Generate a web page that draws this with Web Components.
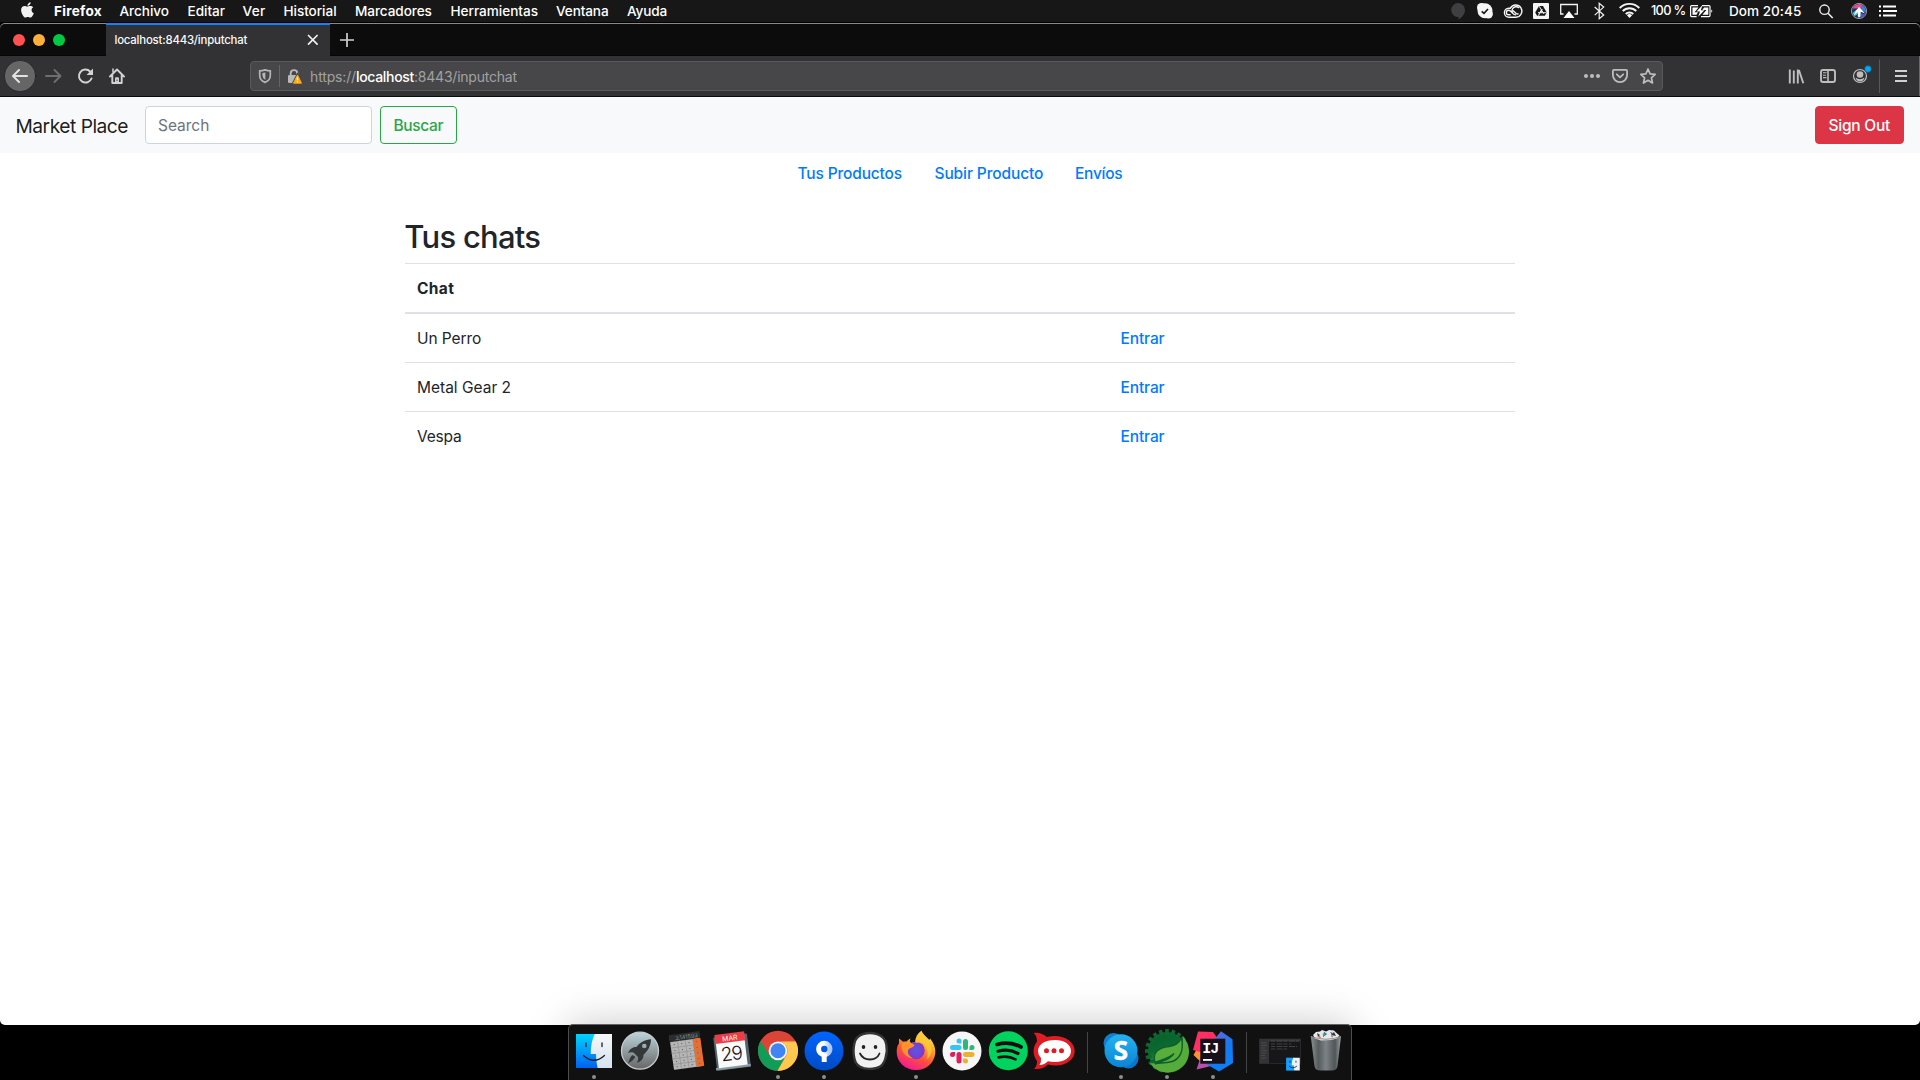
<!DOCTYPE html>
<html lang="es">
<head>
<meta charset="utf-8">
<title>localhost:8443/inputchat</title>
<style>
html,body{margin:0;height:100%;background:#000;overflow:hidden}
body{font-family:Inter,"Liberation Sans",sans-serif;font-size:15.5px;color:#212529}
</style>
</head>
<body>
<mac-desktop></mac-desktop>
<script>
const define = (name, html) => {
  const tpl = document.createElement('template');
  tpl.innerHTML = html;
  customElements.define(name, class extends HTMLElement {
    constructor() {
      super();
      this.attachShadow({mode: 'open'}).appendChild(document.importNode(tpl.content, true));
    }
  });
};

/* One line of text tracked to an exact advance width (attribute w). */
customElements.define('fit-text', class extends HTMLElement {
  constructor() {
    super();
    this.attachShadow({mode: 'open'}).innerHTML =
      '<style>:host{display:block;flex:none;white-space:pre}span{display:inline-block}</style><span><slot></slot></span>';
  }
  connectedCallback() {
    const span = this.shadowRoot.querySelector('span');
    const want = parseFloat(this.getAttribute('w'));
    const n = this.textContent.length;
    if (!want || !n) return;
    span.style.letterSpacing = '0px';
    const natural = span.getBoundingClientRect().width;
    span.style.letterSpacing = ((want - natural) / n).toFixed(3) + 'px';
  }
});

/* ---------- menu bar ---------- */
define('mac-menubar', `
<style>
:host{display:flex;justify-content:space-between;height:22px;background:#171717;color:#fff;font-size:13.6px;font-weight:500;line-height:22px;box-sizing:border-box;overflow:hidden}
div{display:flex}
span{display:block;flex:none}
svg{display:block;flex:none;height:22px}
.l{padding-left:21px}
b{font-weight:700}
</style>
<div class="l">
  <svg width="33" height="22" viewBox="0 0 33 22"><path fill="#f2f2f2" d="M9.6 2.2c.1 1-.3 1.900-.9 2.600-.6.700-1.400 1.100-2.200 1-.1-.9.300-1.800.9-2.400.6-.7 1.500-1.100 2.200-1.200zM12.300 7.300c-1.200.7-1.800 1.700-1.700 3 .1 1.400.8 2.300 2.200 2.900-.3 1-.8 1.900-1.400 2.700-.7 1-1.400 1.700-2.300 1.700-.9 0-1.200-.5-2.300-.5s-1.500.5-2.400.5c-.9 0-1.600-.8-2.300-1.800C.8 13.800.1 11.400.1 9.900c0-2.600 1.700-4 3.400-4 1 0 1.900.7 2.700.7.700 0 1.700-.7 3-.7 1.200 0 2.300.5 3.100 1.400z"/></svg>
  <span style="width:65.500px"><fit-text w="48"><b>Firefox</b></fit-text></span>
  <span style="width:68px"><fit-text w="49.500">Archivo</fit-text></span>
  <span style="width:55px"><fit-text w="37.500">Editar</fit-text></span>
  <span style="width:41px"><fit-text w="23">Ver</fit-text></span>
  <span style="width:71.500px"><fit-text w="53">Historial</fit-text></span>
  <span style="width:95.500px"><fit-text w="76.800">Marcadores</fit-text></span>
  <span style="width:105.500px"><fit-text w="87.500">Herramientas</fit-text></span>
  <span style="width:71px"><fit-text w="52.500">Ventana</fit-text></span>
  <span><fit-text w="40">Ayuda</fit-text></span>
</div>
<div>
  <svg width="200" height="22" viewBox="1450 0 200 22" fill="none" stroke="#f4f4f4" stroke-width="1.300">
    <path fill="#3f3f41" stroke="none" d="M1458 3a7 7 0 0 1 7 7c0 4-3 7.500-6.500 9.500V17A7 7 0 1 1 1458 3z"/>
    <circle cx="1481.500" cy="7.500" r="4.500" fill="#f6f6f6" stroke="none"/><circle cx="1488.300" cy="14" r="4.600" fill="#f6f6f6" stroke="none"/><circle cx="1485" cy="10.800" r="7.500" fill="#f6f6f6" stroke="none"/>
    <path stroke="#171717" stroke-width="1.600" d="m1481.700 11.300 2.300 2 4-4.300"/>
    <g stroke-width="1.400"><path d="M1509 17.200h7a6.100 6.100 0 1 0-5.600-9h-1.600a4.500 4.500 0 0 0 .2 9z"/><path d="M1519 7.900a4.100 4.100 0 1 0-2.900 7q-1.600 0-2.800-1.200l-2.600-2.500q-1-.9-2.100-.9a2.200 2.200 0 0 0 0 4.500h2M1512.900 10.500l3.300 3q1.300 1 2.300 0"/></g>
    <rect x="1533" y="3" width="16" height="16" rx="1" fill="#f4f4f4" stroke="none"/>
    <path fill="#171717" stroke="none" d="M1539 6h4l3.700 6.500-1.800 3.200h-7.800l-1.900-3.200z"/><path stroke="#f4f4f4" stroke-width="1" d="m1539.300 6.300 4.500 7.500M1542.300 9l-4 6.700M1538 12.700h8.500"/><path d="m1541 9.800 1.400 2.500h-2.800z" fill="#f4f4f4" stroke="none"/>
    <path d="M1563.500 14h-2.800V4.500h16.600V14h-2.800"/><path fill="#fff" stroke="none" d="m1569 11 5.500 7h-11z"/>
    <path stroke-width="1.200" d="m1594.700 7 9 8-4.500 3.700V3.300l4.500 3.800-9 8"/>
    <path stroke-width="1.900" d="M1619.700 8a13.700 13.700 0 0 1 19.600 0M1622.700 11a9.600 9.600 0 0 1 13.600 0M1625.700 14a5.400 5.400 0 0 1 7.600 0"/><path fill="#fff" stroke="none" d="m1626.900 15.200 2.600 2.700 2.600-2.700a3.800 3.800 0 0 0-5.200 0z"/>
  </svg>
  <span style="width:39px;padding-left:1.500px;font-size:12.800px"><fit-text w="34.500">100 %</fit-text></span>
  <svg width="38" height="22" viewBox="1690 0 38 22"><path fill="none" stroke="#fff" stroke-width="1.200" d="M1698 5.600h-6.400q-1 0-1 1v9q0 1 1 1h5M1702 5.600h7q1 0 1 1v9q0 1-1 1h-8"/><path d="M1692.500 7.500h6l-4 4.700h3.500l-1.500 2.600h-4zM1708.300 7.500h-4.300l-1.600 2.500h4l-4 4.800h5.900zM1711.300 9.500q2 1.600 0 3.200z" fill="#fff"/><path d="m1702.600 5-6.100 6.500h3.500l-1.800 5.300 6.200-6.500h-3.600z" fill="#fff"/></svg>
  <span style="width:89px;padding-left:1px"><fit-text w="72.300">Dom 20:45</fit-text></span>
  <svg width="102" height="22" viewBox="1818 0 102 22">
    <circle cx="1824.500" cy="9.700" r="4.700" fill="none" stroke="#eee" stroke-width="1.400"/><path d="m1828 13.200 4.700 4.800" stroke="#eee" stroke-width="1.600"/>
    <circle cx="1859" cy="11" r="7.600" fill="#2b2f5e" stroke="#b5b5ba" stroke-width=".8"/>
    <path fill="#e0508f" d="M1852.800 8.500a6.900 6.900 0 0 1 9.700-3.600l-1.500 4-2.500-.7z"/><path fill="#3f7fd8" d="M1862 5.200a7 7 0 0 1 3.700 7.300l-4.700-3z"/><path fill="#43c7d2" d="m1852.500 13 5.500-4.500 1 4.500-4.300 3.300z"/><path fill="#3a64c8" d="m1860 13 5 1.500a7 7 0 0 1-4.500 3.200z"/>
    <path fill="#fff" d="m1859 7 3.500 3.600 2.500 3-4.300-1.900-.3 4.800-1.600 1.300-1-1.700.2-4.200-4 3 1.500-3.500z"/>
    <path stroke="#fff" stroke-width="1.800" d="M1879 6.500h2m2 0h13M1879 11h2m2 0h14M1879 15.500h2m2 0h13"/>
  </svg>
</div>`);

/* ---------- tab strip ---------- */
define('browser-tab', `
<style>
:host{display:flex;align-items:center;box-sizing:border-box;width:224.500px;height:33px;padding:0 11.500px 1px 9px;justify-content:space-between;background:#323234;border-top:2px solid #0a84ff;color:#f9f9fa;font-size:11.400px;font-weight:500}
</style>
<fit-text w="132.700">localhost:8443/inputchat</fit-text>
<svg width="12" height="12" viewBox="0 0 12 12"><path stroke="#f0f0f0" stroke-width="1.700" stroke-linecap="round" d="m1.500 1.500 8.600 8.600M10.100 1.500 1.500 10.100"/></svg>`);
define('tab-strip', `
<style>
:host{display:flex;box-sizing:border-box;height:33px;background:#0c0c0d;border-radius:5px 5px 0 0;box-shadow:inset 0 1px #8a8a8a,inset 0 -1px #050505}
.lights{display:flex;width:105.500px;box-sizing:border-box;padding:11px 0 0 13px;gap:8px}
i{width:12px;height:12px;border-radius:50%;background:var(--c)}
svg{margin:8.500px 0 0 9px}
browser-tab svg{margin:0}
</style>
<div class="lights"><i style="--c:#ff5150"></i><i style="--c:#ffb03a"></i><i style="--c:#00ca44"></i></div>
<browser-tab></browser-tab>
<svg width="16" height="16" viewBox="0 0 16 16"><path stroke="#d0d0d0" stroke-width="1.700" d="M1 8h14M8 1v14"/></svg>`);

/* ---------- toolbar ---------- */
define('url-bar', `
<style>
:host{display:flex;align-items:center;box-sizing:border-box;width:1413px;height:30px;background:#474749;border:1px solid #59595b;border-radius:4px;font-size:14px;color:#a2a2a3}
svg{display:block;flex:none}
.url{display:flex;flex:1;padding-top:1px}
b{font-weight:500;color:#fff}
</style>
<svg width="59" height="28" viewBox="251 62 59 28" fill="none">
  <path stroke="#b5b5b6" stroke-width="1.700" d="M265 69.900q2.700 1 5.300 1v4.600q0 4.800-5.300 6.900-5.300-2.100-5.300-6.900v-4.600q2.600 0 5.300-1z"/><path fill="#b5b5b6" d="M265.400 72.400v7.600q-3-1.700-3-4.500v-2.500z"/>
  <path stroke="#646466" d="M279.500 65v22"/>
  <path stroke="#b9b9ba" stroke-width="1.900" d="M290.700 75v-1.700c0-4.200 6.600-4.200 6.600 0v1.200"/><rect x="288" y="75" width="10" height="8" rx="1.300" fill="#b9b9ba"/>
  <path fill="#474749" d="M297.500 72.300 303.500 84h-12z"/><path fill="#ffa914" stroke="#ffa914" stroke-linejoin="round" d="m297.500 75 4 8.200h-8z"/><path stroke="#fff" stroke-width="1.300" d="M297.500 77.200v3M297.500 81.200v1.200"/>
</svg>
<div class="url"><fit-text w="46">https://</fit-text><fit-text w="58">localhost</fit-text><fit-text w="102.800">:8443/inputchat</fit-text></div>
<style>.url fit-text:nth-child(2){color:#fff;font-weight:500}</style>
<svg width="82" height="28" viewBox="1580 62 82 28" fill="none" stroke="#bdbdbe" stroke-width="1.800">
  <g fill="#bdbdbe" stroke="none"><circle cx="1586" cy="76" r="2"/><circle cx="1592" cy="76" r="2"/><circle cx="1598" cy="76" r="2"/></g>
  <path d="M1614 69.900h12q1.100 0 1.100 1.100v4a7.100 7.100 0 0 1-14.200 0v-4q0-1.100 1.100-1.100z"/><path stroke-linecap="round" stroke-linejoin="round" d="m1616.800 74.300 3.200 3 3.200-3"/>
  <path stroke-width="1.700" stroke-linejoin="round" d="m1648 69 2.100 4.800 5.100.5-3.800 3.500 1.100 5.200-4.500-2.700-4.500 2.700 1.100-5.200-3.800-3.500 5.100-.5z"/>
</svg>`);
define('browser-toolbar', `
<style>
:host{display:flex;box-sizing:border-box;height:41px;padding-top:5px;background:#323234;border-bottom:1px solid #0a0a0b;justify-content:space-between}
svg{display:block;margin-top:-5px}
</style>
<svg width="250" height="40" viewBox="0 56 250 40" fill="none" stroke-linecap="round" stroke-linejoin="round">
  <circle cx="20" cy="76" r="15.700" fill="#666667" stroke="#1e1e20" stroke-width=".8"/>
  <path stroke="#e2e2e2" stroke-width="2" d="M27 76H13.500M19 70l-6 6 6 6"/>
  <path stroke="#6e6e70" stroke-width="2" d="M46 76h14M54.500 70l6 6-6 6"/>
  <path stroke="#d2d2d3" stroke-width="2" d="M91.500 78.500a6.500 6.500 0 1 1-1.400-7"/><path fill="#d2d2d3" d="M93 68.500v6.500h-6.500z"/>
  <path stroke="#d2d2d3" stroke-width="1.900" d="m110 76.500 7-7 7 7M112.300 75.500v7.500h9.400v-7.500"/><path stroke="#d2d2d3" stroke-width="1.500" d="M113 69v3"/><path fill="#d2d2d3" d="M115 83v-4.500q0-1.200 1-1.200h2q1 0 1 1.200V83z"/><path stroke="#323234" d="M117 80v.500"/>
</svg>
<url-bar></url-bar>
<svg width="257" height="40" viewBox="1663 56 257 40" fill="none" stroke="#bebebf" stroke-width="1.900">
  <path d="M1789.800 69.500v14M1793.800 70.500v13M1797.800 69.500v14M1798.900 70l4.400 13.300"/>
  <rect x="1821" y="70" width="14" height="12" rx="2"/><path stroke-width="1.600" d="M1828 70v12"/><path stroke-width="1.100" d="M1823 72.800h3.500M1823 75.200h3M1823 77.600h3.500"/>
  <circle cx="1860" cy="76" r="6.500" stroke-width="1.200"/><circle cx="1860" cy="74.500" r="3.300" fill="#bebebf" stroke="none"/><path fill="#bebebf" stroke="none" d="M1855.500 77.500q2 1.800 4.500 1.800t4.500-1.800q-1 4-4.500 4t-4.500-4z"/>
  <circle cx="1868" cy="69" r="3.400" fill="#00a8f5" stroke="#22465a" stroke-width=".7"/>
  <path stroke="#58585a" stroke-width="1" d="M1879.500 59.500v33.500"/>
  <path stroke="#d0d0d1" stroke-width="1.900" d="M1895 71h12M1895 76h12M1895 81h12"/>
  <path stroke="#6a6a6b" stroke-width="1" d="M1919.500 56v40"/>
</svg>`);

/* ---------- page ---------- */
define('market-button', `
<style>
:host{display:flex;box-sizing:border-box;height:38px;align-items:center;padding:0 13px 0 12.500px;border:1px solid var(--line);border-radius:4px;background:var(--fill,transparent);color:var(--ink);font-weight:500}
</style><slot></slot>`);
define('market-navbar', `
<style>
:host{display:flex;box-sizing:border-box;height:56px;padding:0 16px 0 15.500px;background:#f8f9fb;align-items:center;justify-content:space-between}
form{display:flex;align-items:center}
.brand{font-size:19.200px;color:rgba(0,0,0,.9);width:113px;margin-right:16.500px;padding-top:1px}
.in{display:flex;align-items:center;box-sizing:border-box;width:227px;height:38px;border:1px solid #ced4da;border-radius:4px;background:#fff;color:#6c757d;padding-left:12px;margin-right:8px}
</style>
<form><fit-text class="brand" w="112.500">Market Place</fit-text><div class="in"><fit-text w="51.300">Search</fit-text></div>
<market-button style="--line:#28a745;--ink:#28a745"><fit-text w="49.500">Buscar</fit-text></market-button></form>
<market-button style="--line:#dc3545;--fill:#dc3545;--ink:#fff"><fit-text w="61.500">Sign Out</fit-text></market-button>`);
define('market-links', `
<style>
:host{display:flex;height:40px;align-items:center;padding-left:797.500px;color:#007bff;font-weight:500}
fit-text{width:var(--w)}
</style>
<fit-text w="104.500" style="--w:137px">Tus Productos</fit-text><fit-text w="108.800" style="--w:140.500px">Subir Producto</fit-text><fit-text w="47.300">Envíos</fit-text>`);
define('chat-row', `
<style>
:host{display:flex;box-sizing:border-box;height:49px;padding:0 12px;border-top:1px solid #dee2e6;align-items:center}
.name{width:703.500px}
.act{color:#007bff;font-weight:500}
</style>
<div class="name"><slot></slot></div><div class="act"><slot name="action"></slot></div>`);
define('chat-list', `
<style>
:host{display:block;width:1110px;margin:24px auto 0}
h2{margin:0 0 8px -.7px;height:38px;font-size:31px;line-height:40px;font-weight:500}
.head{font-weight:700;border-bottom:2px solid #dee2e6;height:49px}
.head+chat-row{border-top:0;height:48px}
</style>
<h2><fit-text w="136">Tus chats</fit-text></h2>
<div class="head"><chat-row><fit-text w="37.200">Chat</fit-text></chat-row></div>
<chat-row><fit-text w="64.300">Un Perro</fit-text><fit-text slot="action" w="44">Entrar</fit-text></chat-row>
<chat-row><fit-text w="94">Metal Gear 2</fit-text><fit-text slot="action" w="44">Entrar</fit-text></chat-row>
<chat-row><fit-text w="44.500">Vespa</fit-text><fit-text slot="action" w="44">Entrar</fit-text></chat-row>`);
define('market-page', `
<style>:host{display:block;background:#fff;flex:1;border-radius:0 0 5px 5px;overflow:hidden}</style>
<market-navbar></market-navbar><market-links></market-links><chat-list></chat-list>`);

/* ---------- dock ---------- */
define('dock-item', `
<style>
:host{display:block;width:46px;height:56px;flex:none;position:relative}
:host([running])::after{content:"";position:absolute;left:21px;top:50px;width:4px;height:4px;border-radius:50%;background:#8e8e8e}
</style><slot></slot>`);

/* Cog outline for the leaf badge: 20 rectangular teeth around a 19px disc. */
const cog = Array.from({length: 20}, (_, i) =>
  `<rect x="21.2" y="5" width="3.600" height="6" transform="rotate(${i * 18} 23 27)"/>`).join('');

define('mac-dock', `
<style>
:host{display:flex;position:absolute;left:568px;top:1024px;box-sizing:border-box;width:784px;height:60px;padding-left:2px;background:#111;border:1px solid #4c4d4d;border-top-color:#616464;border-radius:5px 5px 0 0;box-shadow:0 0 42px rgba(0,0,0,.22)}
svg{display:block;margin-top:-1px}
hr{flex:none;width:1px;height:41px;margin:7px 10px;border:0;background:#444}
text{font-family:Inter,"Liberation Sans",sans-serif}
</style>
<dock-item running><svg width="46" height="56"><defs><linearGradient id="f1" x2="0" y2="1"><stop stop-color="#00d4ff"/><stop offset="1" stop-color="#0062f2"/></linearGradient><linearGradient id="f2" x2="0" y2="1"><stop stop-color="#f7f7f9"/><stop offset="1" stop-color="#d5e2ee"/></linearGradient></defs><path fill="url(#f1)" d="M5 10h25v34H5z"/><path fill="url(#f2)" d="M23.700 10H41v34H26.700q-1.500-5-1.700-14h-5.300q0-12 4-20z"/><path fill="none" stroke="#12202c" stroke-width="1.300" stroke-linecap="round" d="M15 19v3.500M31 19v3.500M12.500 31.500Q23 41 33.500 31.500"/></svg></dock-item>
<dock-item><svg width="46" height="56"><defs><linearGradient id="r1" x2="0" y2="1"><stop stop-color="#bcd5dc"/><stop offset="1" stop-color="#666"/></linearGradient></defs><circle cx="23" cy="26.700" r="18.500" fill="url(#r1)" stroke="#c9cccd" stroke-width="1.300"/><path fill="#35383a" fill-rule="evenodd" d="M34 15.300c-5.500.2-11 3-14.500 7.700-4-.2-7 2.500-8.500 6 2-.8 4-.8 5.700-.2l4.300 4.200c.5 2-.2 4-1 5.700 4-1 6.600-4 6.500-8C31 27 34 21.500 34 15.300zM27.300 19.700a2.300 2.300 0 1 1 0 4.600 2.300 2.300 0 0 1 0-4.600zM15.500 31c-2 1.500-3 4-4.300 8.500 3-2.500 4-2 5.500-4.500l1.800-2z"/></svg></dock-item>
<dock-item><svg width="46" height="56"><g transform="rotate(-8 23.500 27)"><rect x="8.500" y="10" width="30" height="34" rx="1" fill="#b5b5b5"/><path fill="#292d2e" d="M8 9h31v7H8z"/><path fill="#f26a25" d="M31.300 16H39v28h-7.700z"/><path stroke="#8c8c8c" stroke-width=".6" d="M8.500 22h30M8.500 27.500h30M8.500 33h30M8.500 38.500h30M16 16v28M23.700 16v28M31.300 16v28"/><g stroke="#666" stroke-width="1" stroke-dasharray="1.200 6.300"><path d="M11.600 19h27M11.600 25h27M11.600 30.500h27M11.600 36h27M11.600 41.300h27"/></g><text x="14" y="14.800" font-size="5.600" fill="#80908f">3,141593</text></g></svg></dock-item>
<dock-item><svg width="46" height="56"><g transform="translate(-.6 0) rotate(-7 23 27)"><rect x="6.500" y="11.500" width="34" height="33.500" rx="1" fill="#53636a"/><rect x="5.500" y="42" width="35" height="2.500" fill="#8b9aa0"/><rect x="8.500" y="10" width="29" height="32.500" fill="#fafafa"/><path fill="#ea3d46" d="M8 9h30v9H8z"/><text x="23" y="16.400" font-size="6.800" fill="#fff" text-anchor="middle">MAR</text><text x="22.600" y="36.200" font-size="19" font-weight="300" letter-spacing="-1" fill="#111" text-anchor="middle">29</text></g></svg></dock-item>
<dock-item running><svg width="46" height="56" viewBox="0 0 46 56"><circle cx="23" cy="26.800" r="20" fill="#dc4437"/><path fill="#109d58" d="M5.700 16.800A20 20 0 0 0 22.500 46.800L31.200 31.500A9.400 9.400 0 0 1 14.900 31.500z"/><path fill="#ffc94d" d="M23 17.400H40.700A20 20 0 0 1 22.500 46.800L31.200 31.500A9.400 9.400 0 0 0 23 17.400z"/><path fill="#dc4437" d="M5.700 16.800 14.900 31.500A9.400 9.400 0 0 1 23 17.400z"/><circle cx="23" cy="26.800" r="9.400" fill="#f4f4f4"/><circle cx="23" cy="26.800" r="7.500" fill="#3f85f3"/></svg></dock-item>
<dock-item running><svg width="46" height="56"><defs><linearGradient id="st" x2="0" y2="1"><stop stop-color="#0065ff"/><stop offset="1" stop-color="#004bc4"/></linearGradient><linearGradient id="sw"><stop offset=".4" stop-color="#fff"/><stop offset="1" stop-color="#a9c8ff"/></linearGradient></defs><circle cx="23" cy="27" r="19.500" fill="url(#st)"/><circle cx="23.300" cy="25" r="5.700" fill="none" stroke="url(#sw)" stroke-width="5"/><path fill="#fff" d="M20.700 30h5v8h-5z"/></svg></dock-item>
<dock-item><svg width="46" height="56"><path fill="#f1f1f1" stroke="#343434" stroke-width="2.400" d="M16 10.200q7-2.500 14 0 8 2.500 9.300 10 1.500 7-.8 14-2 8-9 9.800-7 1.700-13 .2Q9 42 7.500 35 5.500 27 7.500 19 9 12.500 16 10.200z"/><ellipse cx="16.500" cy="23" rx="1.800" ry="2" fill="#222"/><ellipse cx="28.500" cy="23" rx="1.800" ry="2" fill="#222"/><path fill="none" stroke="#252525" stroke-width="1.800" stroke-linecap="round" d="M13 29.500Q16 35.500 23 35.500t9.500-6"/></svg></dock-item>
<dock-item running><svg width="46" height="56"><defs><linearGradient id="ff" x1=".8" x2=".3" y2="1"><stop stop-color="#fff44f"/><stop offset=".35" stop-color="#ffa52a"/><stop offset=".65" stop-color="#ff4f3a"/><stop offset="1" stop-color="#f0189a"/></linearGradient><radialGradient id="fp"><stop stop-color="#5459e8"/><stop offset="1" stop-color="#8a35c4"/></radialGradient></defs><path fill="url(#ff)" d="M28.500 6.700c1 3.500 5 6 7.800 9.300l.8-1.600c4 5 5.700 10 5.200 15C41 39.500 33 46 23 46 12 46 3.700 38 3.700 28c0-4 .5-6 2.300-8.500v-5l4.200 3.300c1.300-.4 2.300-.4 3.500-.2 1-1.500 2.300-2.500 4-3-1.300 2-1 3.200.3 4.500l4-1c.3-5 2.500-8.700 6.500-11.400z"/><circle cx="23" cy="26.500" r="8.700" fill="url(#fp)"/><path fill="#ff932a" d="M9 19c4-2.500 9-1 12.500 2-1 3-5.500 2.500-6.500 5.300-1 3 1.500 6.500 5 8-6-.3-11-5-11.500-11z"/><path fill="#ffc936" d="M28.500 6.700c1 5 9.300 8.800 10 17.500.5 5-1.500 9-5 11.300 2.500-6.500.5-12-4-16.500-3-1-4.500-.500-7 0 .5-5.500 2.500-9.500 6-12.300z" opacity=".8"/></svg></dock-item>
<dock-item><svg width="46" height="56"><circle cx="23" cy="27" r="19.500" fill="#f6f6f6"/><g stroke-width="5" stroke-linecap="round"><path stroke="#36c5f0" d="M13.500 23.500h6.500"/><path stroke="#2eb67d" d="M26.500 17.500v6"/><path stroke="#ecb22e" d="M26.500 30.500h6.500"/><path stroke="#e01e5a" d="M20 30.500v6.500"/></g><path fill="#36c5f0" d="M22.500 19.500H20a2.500 2.500 0 1 1 2.500-2.500z"/><path fill="#2eb67d" d="M30.500 26v-2.500a2.500 2.500 0 1 1 2.500 2.500z"/><path fill="#ecb22e" d="M24 34.500h2.500A2.500 2.500 0 1 1 24 37z"/><path fill="#e01e5a" d="M16 28v2.500a2.500 2.500 0 1 1-2.500-2.500z"/></svg></dock-item>
<dock-item><svg width="46" height="56"><circle cx="23.300" cy="26.800" r="19.500" fill="#00d45f"/><g fill="none" stroke="#101010" stroke-linecap="round"><path stroke-width="3.800" d="M12 20.500q13-3.500 24 2.500"/><path stroke-width="3.200" d="M13 27.300q11-3 20 2.200"/><path stroke-width="2.700" d="M13.500 33.400q9.500-2.300 17 2"/></g></svg></dock-item>
<dock-item><svg width="46" height="56"><path fill="#df1b24" d="M2.700 9c5.300-.8 10 1 13 4C31 9 43.700 17 43.700 27S31 44.500 17 40.500C13 44.500 8 45.500 3 44.800c2.500-2 3.200-5 3-7.800C1.500 31 1.500 23 6 17.500 6 14 5 11 2.700 9z"/><path fill="#fff" d="M24 16c9.500 0 16 4.500 16 11s-6.500 11-16 11q-4 0-7-.8C14.500 39.500 12 41 8.500 41q2-3.500 1.500-7Q7 31 7 27c0-6.500 7-11 17-11z"/><g fill="#df1b24"><circle cx="15.500" cy="26.700" r="2.500"/><circle cx="23" cy="26.700" r="2.500"/><circle cx="30.500" cy="26.700" r="2.500"/></g></svg></dock-item>
<hr>
<dock-item running><svg width="46" height="56"><defs><linearGradient id="sk" x2="0" y2="1"><stop stop-color="#22b3ee"/><stop offset="1" stop-color="#0b84d8"/></linearGradient></defs><circle cx="15.500" cy="19" r="10" fill="#0f7fce"/><circle cx="30.500" cy="34.500" r="10" fill="#0a75c9"/><circle cx="23" cy="26.800" r="16.500" fill="url(#sk)"/><text x="23" y="36" font-size="26" font-weight="700" fill="#fff" stroke="#fff" stroke-width=".5" text-anchor="middle" style="font-family:'Open Sans','Noto Sans',sans-serif">S</text></svg></dock-item>
<dock-item running><svg width="46" height="56"><defs><linearGradient id="sp" gradientUnits="userSpaceOnUse" x1="14" y1="6" x2="26" y2="48"><stop stop-color="#07602d"/><stop offset=".45" stop-color="#0c6a30"/><stop offset="1" stop-color="#55aa3c"/></linearGradient></defs><g fill="url(#sp)"><circle cx="23" cy="27" r="19"/></g><g fill="#0d6830">${cog}</g><path fill="#57ab3b" d="M38.500 11.500c4 5 6.500 10 6.500 16 0 12-9.500 21-21 21-7.500 0-14-3-18-9.500 16 2.500 29-2 31.500-12 1.500-5 1.500-10 1-15.500z"/><path fill="#58ad3c" stroke="#0c602b" stroke-width="1.400" d="M37.500 14c2.500 11-.5 22-11.500 24-5 1-11 .5-15 2 5-3 14-3 19-10.500C25 34 17 36 11 38.500 8 28 15 23.500 25 22.500c6-.5 10-3.500 12.500-8.500z"/></svg></dock-item>
<dock-item running><svg width="46" height="56"><defs><linearGradient id="ij" x2=".6" y2="1"><stop stop-color="#8b5ad0"/><stop offset=".6" stop-color="#1479f0"/><stop offset="1" stop-color="#0d7ff5"/></linearGradient><linearGradient id="ik" x2="0" y2="1"><stop stop-color="#ff8a35"/><stop offset="1" stop-color="#c052a8"/></linearGradient></defs><path fill="#fb9038" d="m8 23 6 2v16L3.500 31z"/><path fill="#b552a9" d="m11 32 17 8-11 3-10.500 2.500z"/><path fill="#ff2f63" d="M8 7.500 23 8l7 10-13 12-14-4z"/><path fill="url(#ij)" d="m31 7.300 11.500 8L43 39l-14 8.500-12-7 9-27z"/><path fill="#15101a" d="M10.300 14.700h25v25h-25z"/><path fill="#fff" d="M13 35h9v1.800h-9z"/><text x="12.300" y="29" font-size="15" font-weight="700" fill="#fff" style="font-family:'Liberation Mono',monospace" letter-spacing="-1">IJ</text></svg></dock-item>
<hr>
<dock-item><svg width="46" height="56"><path fill="#171719" stroke="#353538" stroke-width=".6" d="M2.500 15h41v24.500h-41z"/><path fill="#343437" d="M2.500 15H12v24.500H2.500zM12 15h31.500v2.500H12z"/><path stroke="#5c5c5e" stroke-width=".6" stroke-dasharray="4 1.500 6 1" d="M14 17h28M14 20h20M14 22.500h26M14 25h16"/><path stroke="#5c5c5f" stroke-width=".5" d="M4 19h5M4 21.500h6M4 24h4M4 26.500h6M4 29h5M4 31.500h4M4 34h5"/><g transform="translate(27.200 29.900) scale(.38)"><path fill="#14a0ff" d="M5 10h22v34H5z"/><path fill="#edf2f7" d="M23.700 10H41v34H26.700q-1.500-5-1.700-14h-5.300q0-12 4-20z"/><path fill="none" stroke="#12202c" stroke-width="2.200" d="M15 18v5M31 18v5M12.500 32Q23 41 33.500 32"/></g></svg></dock-item>
<dock-item><svg width="46" height="56"><defs><linearGradient id="tr"><stop stop-color="#8b9092"/><stop offset=".25" stop-color="#565b5e"/><stop offset=".5" stop-color="#7c8285"/><stop offset=".8" stop-color="#505558"/><stop offset="1" stop-color="#9a9fa1"/></linearGradient></defs><path fill="url(#tr)" d="M7.800 12.500Q23 18 38 12.500L34.500 42q-.5 4.500-6 4.500h-11q-5.500 0-6-4.500z"/><path fill="#e8e8e8" d="m10 11 3-3 4-.5 2-1.500 4 1.500 3-1.500 5 .5 2 2 3.500 3-2.500 3-6 1.500-10 .500-6-2z"/><path fill="#35383a" d="m14 9 3 2-2 2zM21 8l3 2-4 3zM31 8l2 4-5-1z"/><path fill="#d6453a" d="m14 13 3-1 1 2zM28 11l2 1-1 2z"/><path fill="#23b8c7" d="m19 10 4-1-1 3z"/><path fill="#3756a8" d="m27 8 3 1-1 2z"/><path fill="none" stroke="#8b9092" stroke-width="1" d="M7.800 12.500Q23 18 38 12.500"/></svg></dock-item>`);

define('mac-desktop', `
<style>
:host{display:flex;flex-direction:column;width:1920px;height:1025px;background:#000;position:relative}
tab-strip{margin-top:1px}
.clip{position:absolute;left:0;top:0;width:1920px;height:1080px;overflow:hidden;pointer-events:none}
</style>
<mac-menubar></mac-menubar>
<tab-strip></tab-strip>
<browser-toolbar></browser-toolbar>
<market-page></market-page>
<div class="clip"><mac-dock></mac-dock></div>`);
</script>
</body>
</html>
